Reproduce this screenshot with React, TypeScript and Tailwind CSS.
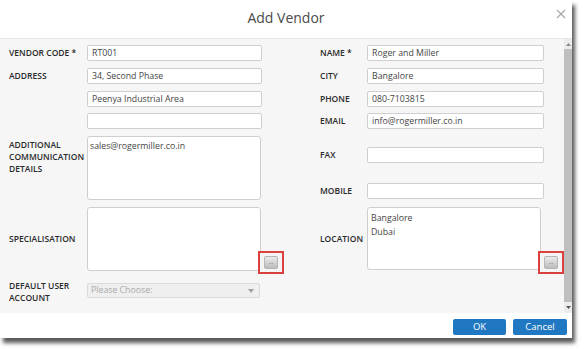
import React from "react";

const font = { fontFamily: '"Open Sans", "Noto Sans", Arial, sans-serif' };

function Input({ value, className = "" }: { value?: string; className?: string }) {
  return (
    <div
      className={`h-[16px] border border-[#cfcfcf] rounded-[2px] bg-white flex items-center pl-[4px] text-[8.75px] text-[#444] leading-none ${className}`}
    >
      {value}
    </div>
  );
}

function DotsButton() {
  return (
    <div className="absolute left-[171px] top-[44px] w-[26px] h-[23px] border-2 border-[#d9413f] bg-[#f4f4f4] flex items-center justify-center">
      <div className="w-[14px] h-[13px] rounded-[2px] border border-[#b5b5b5] bg-gradient-to-b from-[#ebebeb] to-[#bcbcbc] flex items-center justify-center">
        <span className="text-[6px] leading-none text-[#555] -mt-[2px]">...</span>
      </div>
    </div>
  );
}

function Label({ children, className = "" }: { children: React.ReactNode; className?: string }) {
  return (
    <div className={`text-[8.5px] font-semibold text-[#2a2a2a] leading-[12px] ${className}`}>{children}</div>
  );
}

export default function App() {
  return (
    <div className="w-[585px] h-[349px] bg-white overflow-hidden relative" style={font}>
      <div className="w-[572px] h-[338px] bg-white flex flex-col shadow-[3px_5px_4px_rgba(0,0,0,0.65)]">
        {/* Header */}
        <div className="h-[39px] relative flex items-center justify-center border-b border-[#e6e6e6]">
          <span className="text-[14px] text-[#4a4a4a] -mt-[4px]">Add Vendor</span>
          <svg className="absolute left-[556px] top-[9px]" width="10" height="10" viewBox="0 0 10 10">
            <path d="M1 1 L9 9 M9 1 L1 9" stroke="#a6a6a6" strokeWidth="1.1" fill="none" />
          </svg>
        </div>
        {/* Body */}
        <div className="h-[274px] bg-[#f6f6f6] flex">
          <div className="flex-1 flex">
            {/* Left column */}
            <div className="w-[320px] pl-[9px] pt-[6px] flex flex-col">
              <div className="flex items-center h-[16px]">
                <Label className="w-[78px]">VENDOR CODE *</Label>
                <Input value="RT001" className="w-[175px]" />
              </div>
              <div className="flex items-center h-[16px] mt-[7px]">
                <Label className="w-[78px]">ADDRESS</Label>
                <Input value="34, Second Phase" className="w-[175px]" />
              </div>
              <div className="flex items-center h-[16px] mt-[7px]">
                <div className="w-[78px]" />
                <Input value="Peenya Industrial Area" className="w-[175px]" />
              </div>
              <div className="flex items-center h-[16px] mt-[6px]">
                <div className="w-[78px]" />
                <Input className="w-[175px]" />
              </div>
              <div className="flex mt-[7px]">
                <Label className="w-[78px] pt-[3px]">
                  ADDITIONAL
                  <br />
                  COMMUNICATION
                  <br />
                  DETAILS
                </Label>
                <div className="w-[174px] h-[64px] border border-[#cfcfcf] rounded-[3px] bg-white px-[2px] pt-[3px] text-[8.75px] text-[#444] leading-[12px]">
                  sales@rogermiller.co.in
                </div>
              </div>
              <div className="flex items-center mt-[7px]">
                <Label className="w-[78px]">SPECIALISATION</Label>
                <div className="relative">
                  <div className="w-[174px] h-[64px] border border-[#cfcfcf] rounded-[3px] bg-white" />
                  <DotsButton />
                </div>
              </div>
              <div className="flex items-center mt-[9px]">
                <Label className="w-[78px]">
                  DEFAULT USER
                  <br />
                  ACCOUNT
                </Label>
                <div className="w-[173px] h-[15px] border border-[#dadada] rounded-[2px] bg-[#efefef] flex items-center justify-between pl-[3px] pr-[5px] -mt-[3px]">
                  <span className="text-[8.75px] text-[#a9a9a9] leading-none">Please Choose:</span>
                  <svg width="6" height="4" viewBox="0 0 6 4">
                    <path d="M0 0 L6 0 L3 4 Z" fill="#a0a0a0" />
                  </svg>
                </div>
              </div>
            </div>
            {/* Right column */}
            <div className="pt-[6px] flex flex-col">
              <div className="flex items-center h-[16px]">
                <Label className="w-[47px]">NAME *</Label>
                <Input value="Roger and Miller" className="w-[177px]" />
              </div>
              <div className="flex items-center h-[16px] mt-[7px]">
                <Label className="w-[47px]">CITY</Label>
                <Input value="Bangalore" className="w-[177px]" />
              </div>
              <div className="flex items-center h-[16px] mt-[7px]">
                <Label className="w-[47px]">PHONE</Label>
                <Input value="080-7103815" className="w-[177px]" />
              </div>
              <div className="flex items-center h-[16px] mt-[6px]">
                <Label className="w-[47px]">EMAIL</Label>
                <Input value="info@rogermiller.co.in" className="w-[177px]" />
              </div>
              <div className="flex items-center h-[16px] mt-[18px]">
                <Label className="w-[47px]">FAX</Label>
                <Input className="w-[177px]" />
              </div>
              <div className="flex items-center h-[16px] mt-[20px]">
                <Label className="w-[47px]">MOBILE</Label>
                <Input className="w-[177px]" />
              </div>
              <div className="flex items-center mt-[8px]">
                <Label className="w-[47px]">LOCATION</Label>
                <div className="relative">
                  <div className="w-[174px] h-[63px] border border-[#cfcfcf] rounded-[3px] bg-white pl-[3px] pt-[3px] text-[8.75px] text-[#444] leading-[14px]">
                    Bangalore
                    <br />
                    Dubai
                  </div>
                  <DotsButton />
                </div>
              </div>
            </div>
          </div>
          {/* Scrollbar */}
          <div className="w-[8px] flex flex-col bg-[#ececec]">
            <div className="h-[10px] flex items-center justify-center">
              <svg width="5" height="3" viewBox="0 0 5 3">
                <path d="M0 3 L5 3 L2.5 0 Z" fill="#8a8a8a" />
              </svg>
            </div>
            <div className="flex-1 bg-[#bfbfbf]" />
            <div className="h-[11px] flex items-center justify-center">
              <svg width="5" height="3" viewBox="0 0 5 3">
                <path d="M0 0 L5 0 L2.5 3 Z" fill="#555" />
              </svg>
            </div>
          </div>
        </div>
        {/* Footer */}
        <div className="flex-1 flex justify-end items-start pt-[6px] pr-[5px] gap-[7px]">
          <div className="w-[53px] h-[16px] rounded-[2px] bg-[#1f78c1] text-white text-[9.5px] flex items-center justify-center leading-none">
            OK
          </div>
          <div className="w-[54px] h-[16px] rounded-[2px] bg-[#1f78c1] text-white text-[9.5px] flex items-center justify-center leading-none">
            Cancel
          </div>
        </div>
      </div>
    </div>
  );
}
